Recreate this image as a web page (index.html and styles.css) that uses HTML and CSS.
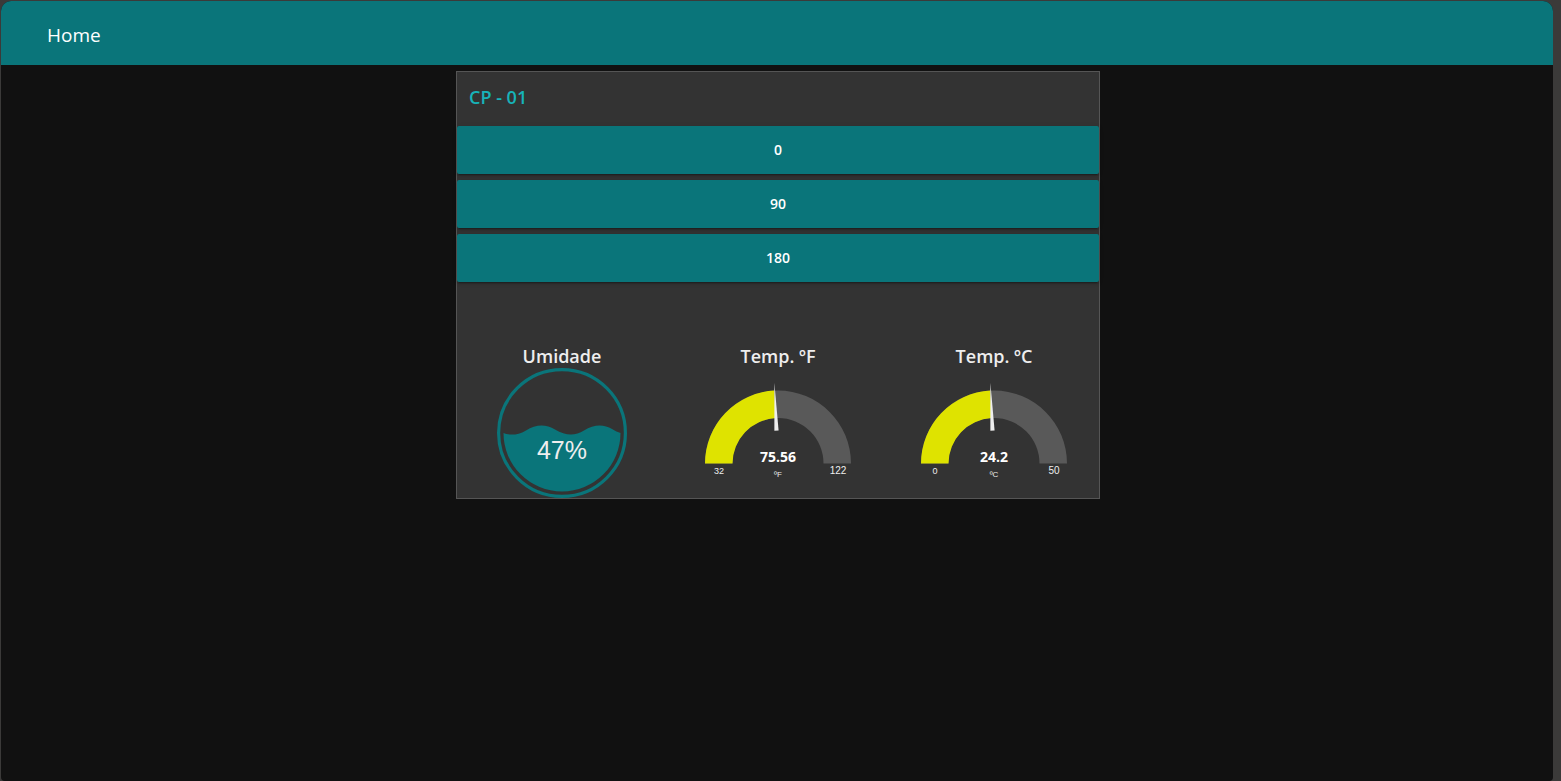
FILE: index.html
```html
<!DOCTYPE html>
<html lang="pt">
<head>
<meta charset="utf-8">
<title>Home</title>
<link rel="stylesheet" href="styles.css">
</head>
<body>
<div class="window">
  <header class="toolbar"><h1 class="toolbar-title">Home</h1></header>
  <main class="content">
    <section class="card">
      <h2 class="card-title">CP - 01</h2>
      <div class="buttons">
        <button class="btn" type="button">0</button>
        <button class="btn" type="button">90</button>
        <button class="btn" type="button">180</button>
      </div>
      <div class="gauges">
        <figure class="gauge">
          <figcaption class="gauge-title">Umidade</figcaption>
          <svg class="gauge-art" viewBox="0 0 210 130">
            <circle class="ring" cx="105" cy="65" r="63.4"/>
            <path class="water" d="M46.5 65 C51 67 60 68 69 62.500 C79 56 89 56 98 61.500 C109 68 118 68 127 62.500 C137 56 147 56 155 61 C158 63 161 64 163.500 65 A58.500 58.500 0 0 1 46.500 65Z"/>
            <text class="percent" x="105" y="91">47%</text>
          </svg>
        </figure>
        <figure class="gauge">
          <figcaption class="gauge-title">Temp. ºF</figcaption>
          <svg class="gauge-art" viewBox="0 0 210 130">
            <path class="track" d="M32 95.500 A73 73 0 0 1 178 95.500 H150.500 A45.500 45.500 0 0 0 59.500 95.500Z"/>
            <path class="level" d="M32 95.500 A73 73 0 0 1 101.300 22.600 L102.700 50.100 A45.500 45.500 0 0 0 59.500 95.500Z"/>
            <path class="needle" d="M101.400 15 L105.600 62.400 L101.400 62.800Z"/>
            <text class="value" x="105" y="94">75.56</text>
            <text class="limit-min" x="46" y="106">32</text>
            <text class="limit-max" x="165" y="106">122</text>
            <text class="unit" x="105" y="109">ºF</text>
          </svg>
        </figure>
        <figure class="gauge">
          <figcaption class="gauge-title">Temp. ºC</figcaption>
          <svg class="gauge-art" viewBox="0 0 210 130">
            <path class="track" d="M32 95.500 A73 73 0 0 1 178 95.500 H150.500 A45.500 45.500 0 0 0 59.500 95.500Z"/>
            <path class="level" d="M32 95.500 A73 73 0 0 1 101.300 22.600 L102.700 50.100 A45.500 45.500 0 0 0 59.500 95.500Z"/>
            <path class="needle" d="M101.400 15 L105.600 62.400 L101.400 62.800Z"/>
            <text class="value" x="105" y="94">24.2</text>
            <text class="limit-min" x="46" y="106">0</text>
            <text class="limit-max" x="165" y="106">50</text>
            <text class="unit" x="105" y="109">ºC</text>
          </svg>
        </figure>
      </div>
    </section>
  </main>
</div>
</body>
</html>
```
FILE: styles.css
```css
* { box-sizing: border-box; }

body {
  margin: 0;
  min-height: 100vh;
  padding: 1px 8px 0 1px;
  display: flex;
  background: #3b3a39;
  color: #eee;
  font-family: "Open Sans", "Noto Sans", sans-serif;
}

.window {
  flex: 1;
  background: #111;
  border-radius: 10px 10px 4px 4px;
  overflow: hidden;
}

.toolbar {
  height: 64px;
  padding: 4px 46px 0;
  display: flex;
  align-items: center;
  background: #0a757a;
}

.toolbar-title {
  margin: 0;
  color: #fff;
  font-size: 19px;
  font-weight: 400;
}

.content {
  display: flex;
  justify-content: center;
  padding: 6px;
}

.card {
  width: 100%;
  max-width: 644px;
  margin-left: 2px;
  background: #333;
  border: 1px solid #555;
}

.card-title {
  margin: 0;
  padding: 0 12px;
  font-size: 18px;
  font-weight: 600;
  line-height: 50px;
  color: #17b3b9;
}

.buttons {
  display: grid;
  gap: 6px;
  padding-top: 4px;
}

.btn {
  height: 48px;
  padding: 0 6px 2px;
  border: 0;
  border-radius: 2px;
  background: #0a757a;
  color: #fff;
  font: 600 14px "Open Sans", "Noto Sans", sans-serif;
  box-shadow: 0 3px 1px -2px rgba(0, 0, 0, .2), 0 2px 2px rgba(0, 0, 0, .14), 0 1px 5px rgba(0, 0, 0, .12);
  cursor: pointer;
}

.gauges {
  display: grid;
  grid-template-columns: repeat(3, 1fr);
  gap: 6px;
  padding-top: 62px;
}

.gauge { margin: 0; }

.gauge-title {
  font-size: 18px;
  font-weight: 600;
  line-height: 24px;
  text-align: center;
}

.gauge-art {
  display: block;
  width: 100%;
}

.gauge-art text {
  fill: #eee;
  text-anchor: middle;
  font-family: "Liberation Sans", Arial, sans-serif;
}

.ring { fill: none; stroke: #0a757a; stroke-width: 3.2; }
.water { fill: #0a757a; }
.track { fill: #595959; }
.level { fill: #dfe300; }
.needle { fill: #eee; }

.gauge-art .percent { font-size: 25px; }
.gauge-art .value { fill: #fff; font: 700 14px "Open Sans", "Noto Sans", sans-serif; }
.gauge-art .limit-min { font-size: 9px; }
.gauge-art .limit-max { font-size: 10px; }
.gauge-art .unit { font-size: 8px; }
```
